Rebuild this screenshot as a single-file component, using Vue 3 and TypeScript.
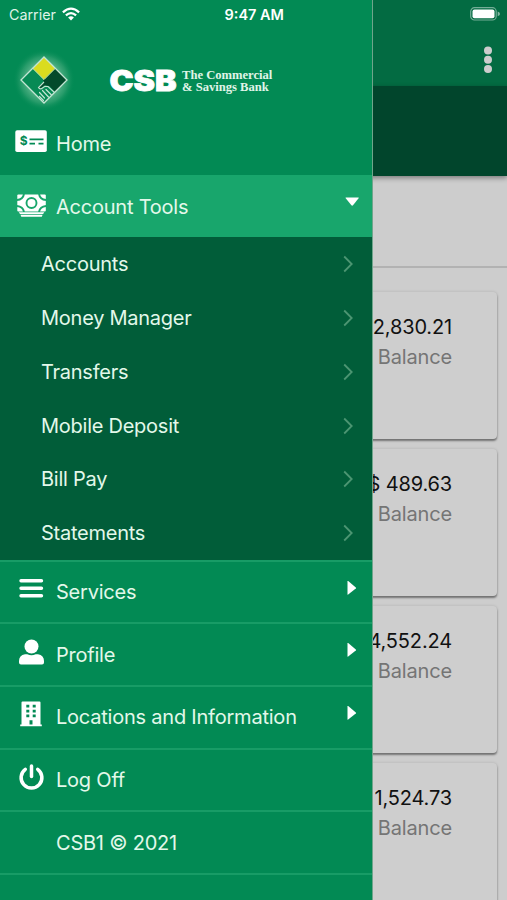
<script setup lang="ts">
interface Account {
  amount: string
}

interface MenuItem {
  label: string
  icon: string
  expandable: boolean
}

const accounts: Account[] = [
  { amount: '$ 2,830.21' },
  { amount: '$ 489.63' },
  { amount: '$ 4,552.24' },
  { amount: '$ 1,524.73' },
]

const tools: string[] = [
  'Accounts',
  'Money Manager',
  'Transfers',
  'Mobile Deposit',
  'Bill Pay',
  'Statements',
]

const menu: MenuItem[] = [
  { label: 'Services', icon: 'bars', expandable: true },
  { label: 'Profile', icon: 'user', expandable: true },
  { label: 'Locations and Information', icon: 'building', expandable: true },
  { label: 'Log Off', icon: 'power', expandable: false },
  { label: 'CSB1 © 2021', icon: '', expandable: false },
]
</script>

<template>
  <div class="screen">
    <main class="page">
      <header class="appbar">
        <svg class="dots" viewBox="0 0 10 30">
          <circle cx="5" cy="5.5" r="4" />
          <circle cx="5" cy="14.7" r="4" />
          <circle cx="5" cy="23.9" r="4" />
        </svg>
      </header>
      <div class="banner"></div>
      <div class="summary"></div>
      <section class="cards">
        <article v-for="a in accounts" :key="a.amount" class="card">
          <span class="amount">{{ a.amount }}</span>
          <span class="caption">Balance</span>
        </article>
      </section>
    </main>

    <aside class="drawer">
      <div class="brand">
        <svg class="emblem" viewBox="0 0 64 64">
          <defs>
            <radialGradient id="glow">
              <stop offset="0.45" stop-color="#8fd0ae" stop-opacity="0.75" />
              <stop offset="0.75" stop-color="#5db58a" stop-opacity="0.4" />
              <stop offset="1" stop-color="#028a54" stop-opacity="0" />
            </radialGradient>
          </defs>
          <circle cx="32" cy="32" r="31" fill="url(#glow)" />
          <path d="M32 9 55 32 32 55 9 32Z" fill="#078a55" />
          <path d="M32 9 43.3 20.3 32 31.6 20.7 20.3Z" fill="#dadc1f" />
          <path d="M43.3 20.3 55 32 43 44 37.500 38 32 37.500 28.500 41.500 26.500 39.500 32 33.500 31 32.600Z" fill="#034a2b" />
          <path d="M32 34 26.500 39.500q1.500 2.500 4 0.500l2.500-1.800 3 .3 6.500 6" fill="none" stroke="#c3e5d3" stroke-width="1.100" />
          <path d="m27.500 44.500 5 5.500M30.500 42.500l6 6.500M34 41.500l5.500 5.500M27.500 48.500l4 4" fill="none" stroke="#c3e5d3" stroke-width="1.200" stroke-linecap="round" />
          <path d="M20.700 20.300 32 31.600 43.300 20.300" fill="none" stroke="#cfe9a8" stroke-width="1" />
          <path d="M32 9 55 32 32 55 9 32Z" fill="none" stroke="#c3e5d3" stroke-width="1.300" />
        </svg>
        <svg class="wordmark" viewBox="0 0 68 24">
          <text x="0.500" y="21.700" textLength="67" lengthAdjust="spacingAndGlyphs">CSB</text>
        </svg>
        <div class="bankname">The Commercial<br />&amp; Savings Bank</div>
      </div>

      <nav>
        <div class="row top">
          <svg class="icon" viewBox="0 0 32 32">
            <rect x="0.300" y="3.300" width="31.500" height="21.700" rx="1.800" fill="#fff" />
            <text class="dollar" x="4.800" y="18">$</text>
            <path d="M14.500 12.300H28.500M14.500 16.600H20M23.500 16.600h5" stroke="#028a54" stroke-width="1.800" />
          </svg>
          <span class="label">Home</span>
        </div>

        <div class="row top active">
          <svg class="icon" viewBox="0 0 32 32">
            <rect x="2.300" y="4.500" width="28.500" height="17" rx="1" fill="#fff" />
            <g fill="none" stroke="#18a66c" stroke-width="1.900">
              <circle cx="16.500" cy="13" r="5" />
              <path d="M9 4Q8 9.500 2 10M24 4Q25 9.500 31 10M9 22Q8 16.500 2 16M24 22Q25 16.500 31 16" />
            </g>
            <path d="M3.800 22.300H29.300L28.100 24H5ZM5.500 24.800H27.600L26.800 26.800H6.300Z" fill="#fff" />
          </svg>
          <span class="label">Account Tools</span>
          <svg class="caret" viewBox="0 0 16 16"><path d="M1.500 4.100Q1.300 3.500 2 3.500H14.300Q15 3.500 14.800 4.100L9 11.300Q8.200 12 7.400 11.300Z" /></svg>
        </div>

        <ul class="sub">
          <li v-for="t in tools" :key="t">
            <span>{{ t }}</span>
            <svg class="chevron" viewBox="0 0 10 18"><path d="M1.200 1.500 8.700 9 1.200 16.500" /></svg>
          </li>
        </ul>

        <div v-for="m in menu" :key="m.label" class="row item">
          <svg class="icon" viewBox="0 0 32 32">
            <path v-if="m.icon === 'bars'" d="M6 6.700H26.500M6 14.200H26.500M6 21.800H26.500" stroke="#fff" stroke-width="3.400" stroke-linecap="round" />
            <g v-else-if="m.icon === 'user'" fill="#fff">
              <circle cx="16.500" cy="9.500" r="7" />
              <path d="M10 17.300H12.300Q16.500 19 20.700 17.300H23Q29 18.500 29 24V25.500Q29 27.500 27 27.500H6Q4 27.500 4 25.500V24Q4 18.500 10 17.300Z" />
            </g>
            <path v-else-if="m.icon === 'building'" fill="#fff" fill-rule="evenodd" d="M6.500 3.500Q6.500 2.500 7.500 2.500H24.500Q25.500 2.500 25.500 3.500V25.500H26.800V27.300H5.200V25.500H6.500ZM11.300 5.800V8.500H14.300V5.800ZM17.700 5.800V8.500H20.700V5.800ZM11.300 10.700V13.500H14.300V10.700ZM17.700 10.700V13.500H20.700V10.700ZM11.300 15.500V18.300H14.300V15.500ZM17.700 15.500V18.300H20.700V15.500ZM14.500 21.200V25.500H17.500V21.200Z" />
            <g v-else-if="m.icon === 'power'" fill="none" stroke="#fff" stroke-width="3.500" stroke-linecap="round">
              <path d="M10.300 7.300A10.400 10.400 0 1 0 22.700 7.300" />
              <path d="M16.500 4V14.500" />
            </g>
          </svg>
          <span class="label">{{ m.label }}</span>
          <svg v-if="m.expandable" class="caret" viewBox="0 0 16 16"><path d="M3.500 1.500Q3.500 .8 4.200 1.100L11.800 7.400Q12.400 8 11.800 8.500L4.200 14.600Q3.500 15 3.500 14.200Z" /></svg>
        </div>
      </nav>
    </aside>

    <div class="status">
      <span class="carrier">Carrier</span>
      <svg class="wifi" viewBox="0 0 18 14">
        <g fill="none" stroke="#fff" stroke-width="2.300">
          <path d="M.9 5.300Q9 -2 17.100 5.300" />
          <path d="M3.900 8.400Q9 3.900 14.100 8.400" />
        </g>
        <path d="M6.100 10.400Q9 8 11.900 10.400L9 13.500Z" fill="#fff" />
      </svg>
      <span class="time">9:47 AM</span>
      <svg class="battery" viewBox="0 0 31 14">
        <rect x=".7" y=".7" width="25.500" height="12.300" rx="3.800" fill="none" stroke="#fff" stroke-opacity=".45" stroke-width="1.200" />
        <rect x="2.500" y="2.500" width="22" height="8.800" rx="2" fill="#fff" />
        <path d="M27.700 4.600Q30 5.300 30 6.900 30 8.400 27.700 9.200Z" fill="#fff" fill-opacity=".5" />
      </svg>
    </div>
  </div>
</template>

<style>
body {
  margin: 0;
  background: #cdcdcd;
}
</style>

<style scoped>
.screen {
  position: relative;
  width: 507px;
  height: 900px;
  overflow: hidden;
  font-family: Inter, "Liberation Sans", sans-serif;
  background: #cdcdcd;
}
.page {
  height: 900px;
}
.appbar {
  height: 86px;
  box-sizing: border-box;
  padding: 45px 14px 0 0;
  display: flex;
  justify-content: flex-end;
  background: #036b42;
}
.dots {
  width: 10px;
  height: 30px;
  fill: #cdcdcd;
}
.banner {
  height: 90px;
  background: #01452c;
  box-shadow: 0 2px 5px rgba(0, 0, 0, 0.4);
}
.summary {
  height: 90px;
  border-bottom: 2px solid #b2b2b2;
}
.cards {
  display: flex;
  flex-direction: column;
  gap: 10px;
  padding: 24px 10px 0;
}
.card {
  height: 147px;
  flex: none;
  box-sizing: border-box;
  padding: 21px 45px 0 0;
  display: flex;
  flex-direction: column;
  align-items: flex-end;
  border-radius: 4px;
  background: #cecece;
  box-shadow: 0 2px 2px rgba(0, 0, 0, 0.42), 0 0 3px rgba(0, 0, 0, 0.14);
}
.amount,
.caption {
  font-size: 20px;
  line-height: 29.5px;
  letter-spacing: -0.15px;
}
.amount {
  color: #111;
}
.caption {
  color: #757575;
}
.drawer {
  position: absolute;
  left: 0;
  top: 0;
  width: 372px;
  height: 900px;
  background: #028a54;
  border-right: 0.5px solid #6fa58b;
  color: #e3f8ea;
}
.brand {
  height: 112px;
  box-sizing: border-box;
  padding: 48px 0 0 11.5px;
  display: flex;
  align-items: flex-start;
}
.emblem {
  width: 64px;
  height: 64px;
}
.wordmark {
  width: 68px;
  height: 24px;
  overflow: visible;
  margin: 20.5px 0 0 33.5px;
}
.wordmark text {
  font: 900 28px Inter, sans-serif;
  fill: #fff;
  stroke: #fff;
  stroke-width: 0.8px;
}
.bankname {
  margin: 21px 0 0 5px;
  font: 700 12.6px/12px "Liberation Serif", serif;
  color: #e0f5e9;
  white-space: nowrap;
}
.row {
  display: flex;
  align-items: center;
  height: 62.7px;
  box-sizing: border-box;
  padding: 0 12.5px 0 15px;
}
.icon {
  width: 32px;
  height: 32px;
  flex: none;
}
.dollar {
  font: 700 12px Inter, sans-serif;
  fill: #028a54;
}
.label {
  flex: 1;
  margin-left: 9px;
  font-size: 20px;
  letter-spacing: -0.22px;
  white-space: nowrap;
}
.top .label {
  padding-top: 2px;
}
.active {
  background: #18a66c;
}
.caret {
  width: 16px;
  height: 16px;
  margin-bottom: 9px;
  fill: #fff;
}
.sub {
  list-style: none;
  margin: 0;
  padding: 0;
  background: #015d39;
}
.sub li {
  display: flex;
  align-items: center;
  justify-content: space-between;
  height: 53.75px;
  padding: 0 19px 0 41px;
  font-size: 20px;
  letter-spacing: -0.25px;
}
.chevron {
  width: 10px;
  height: 18px;
  fill: none;
  stroke: #4c9572;
  stroke-width: 1.8px;
}
.item {
  height: 62.6px;
  border-top: 2px solid #189c66;
}
.item .icon {
  margin-bottom: 4px;
}
.item:last-child {
  height: 64.6px;
  border-bottom: 2px solid #189c66;
}
.status {
  position: absolute;
  left: 0;
  top: 0;
  width: 507px;
  height: 28px;
  box-sizing: border-box;
  padding: 0 6px 0 9px;
  display: grid;
  grid-template-columns: auto 1fr auto auto;
  align-items: center;
  color: #fff;
}
.carrier {
  font-size: 14.3px;
  color: #dff3e8;
}
.wifi {
  width: 18px;
  height: 14px;
  margin-left: 6px;
}
.time {
  font-size: 14.5px;
  font-weight: 600;
  margin-right: 186px;
}
.battery {
  width: 31px;
  height: 14px;
}
</style>
